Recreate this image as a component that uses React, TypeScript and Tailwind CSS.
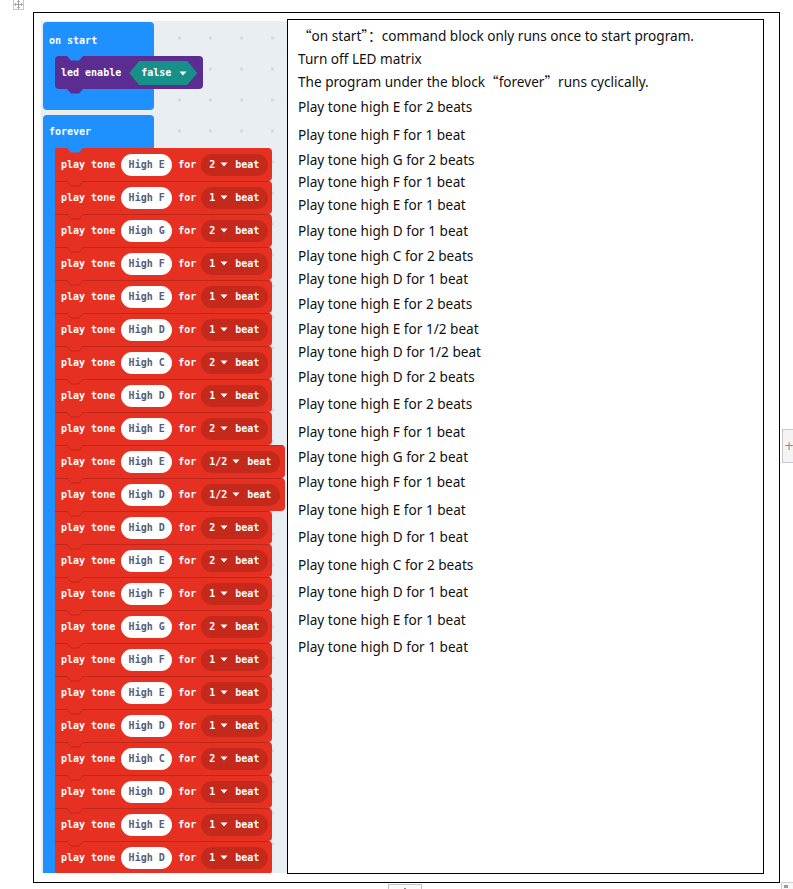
import React from "react";

const BLUE = "#1e90ff";

type Blk = { n: string; b: string };
const blocks: Blk[] = [
  { n: "E", b: "2" }, { n: "F", b: "1" }, { n: "G", b: "2" }, { n: "F", b: "1" },
  { n: "E", b: "1" }, { n: "D", b: "1" }, { n: "C", b: "2" }, { n: "D", b: "1" },
  { n: "E", b: "2" }, { n: "E", b: "1/2" }, { n: "D", b: "1/2" }, { n: "D", b: "2" },
  { n: "E", b: "2" }, { n: "F", b: "1" }, { n: "G", b: "2" }, { n: "F", b: "1" },
  { n: "E", b: "1" }, { n: "D", b: "1" }, { n: "C", b: "2" }, { n: "D", b: "1" },
  { n: "E", b: "1" }, { n: "D", b: "1" },
];

const lines: { t: React.ReactNode; c: string }[] = [
  { t: <><span className="font-['Noto_Sans_CJK_SC',sans-serif]">“</span>on start<span className="font-['Noto_Sans_CJK_SC',sans-serif]">”：</span>command block only runs once to start program.</>, c: "mt-0" },
  { t: "Turn off LED matrix", c: "mt-[3px]" },
  { t: <>The program under the block<span className="font-['Noto_Sans_CJK_SC',sans-serif]">“</span>forever<span className="font-['Noto_Sans_CJK_SC',sans-serif]">”</span>runs cyclically.</>, c: "mt-[2px]" },
  { t: "Play tone high E for 2 beats", c: "mt-[5px]" },
  { t: "Play tone high F for 1 beat", c: "mt-[8px]" },
  { t: "Play tone high G for 2 beats", c: "mt-[5px]" },
  { t: "Play tone high F for 1 beat", c: "mt-[2px]" },
  { t: "Play tone high E for 1 beat", c: "mt-[3px]" },
  { t: "Play tone high D for 1 beat", c: "mt-[6px]" },
  { t: "Play tone high C for 2 beats", c: "mt-[5px]" },
  { t: "Play tone high D for 1 beat", c: "mt-[3px]" },
  { t: "Play tone high E for 2 beats", c: "mt-[5px]" },
  { t: "Play tone high E for 1/2 beat", c: "mt-[5px]" },
  { t: "Play tone high D for 1/2 beat", c: "mt-[3px]" },
  { t: "Play tone high D for 2 beats", c: "mt-[5px]" },
  { t: "Play tone high E for 2 beats", c: "mt-[7px]" },
  { t: "Play tone high F for 1 beat", c: "mt-[8px]" },
  { t: "Play tone high G for 2 beat", c: "mt-[5px]" },
  { t: "Play tone high F for 1 beat", c: "mt-[5px]" },
  { t: "Play tone high E for 1 beat", c: "mt-[8px]" },
  { t: "Play tone high D for 1 beat", c: "mt-[7px]" },
  { t: "Play tone high C for 2 beats", c: "mt-[8px]" },
  { t: "Play tone high D for 1 beat", c: "mt-[7px]" },
  { t: "Play tone high E for 1 beat", c: "mt-[8px]" },
  { t: "Play tone high D for 1 beat", c: "mt-[7px]" },
];

function Tri() {
  return (
    <svg width="8" height="5" viewBox="0 0 8 5" className="shrink-0">
      <path d="M0.5 0.5 H7.5 L4 4.5 Z" fill="#fff" />
    </svg>
  );
}

function Notch({ fill, stroke }: { fill?: string; stroke?: string }) {
  return (
    <svg width="100%" height="6" viewBox="0 0 300 6" preserveAspectRatio="xMinYMin slice" className="absolute left-0 top-0 pointer-events-none">
      {fill ? (
        <path d="M12 0 L16 4.5 H24 L28 0 Z" fill={fill} />
      ) : (
        <path d="M0 0.5 H12 L16 5 H24 L28 0.5 H300" fill="none" stroke={stroke} strokeWidth="1" />
      )}
    </svg>
  );
}

function Tab({ color }: { color: string }) {
  return (
    <svg width="16" height="5" viewBox="0 0 16 5" className="absolute left-[12px] top-full">
      <path d="M0 0 L4 4.5 H12 L16 0 Z" fill={color} />
    </svg>
  );
}

function ToneBlock({ blk, first }: { blk: Blk; first: boolean }) {
  const half = blk.b === "1/2";
  return (
    <div
      className={
        "relative overflow-hidden flex items-center h-[33px] pl-[6px] bg-[#e63022] rounded-r-[4px] text-white " +
        (half ? "w-[230px]" : "w-[217px]")
      }
    >
      {first ? <Notch fill={BLUE} /> : <Notch stroke="rgba(120,20,10,0.35)" />}
      <span>play tone</span>
      <span className="ml-[6px] flex items-center justify-center w-[51px] h-[22px] rounded-full bg-white text-[#575e75]">
        High {blk.n}
      </span>
      <span className="ml-[6px]">for</span>
      <span
        className={
          "ml-[5px] flex items-center h-[22px] rounded-full bg-[#c4291c] pl-[8px] " +
          (half ? "w-[79px]" : "w-[67px]")
        }
      >
        <span>{blk.b}</span>
        <span className="ml-[5px] mr-[7px] flex items-center">
          <Tri />
        </span>
        <span>beat</span>
      </span>
    </div>
  );
}

function Workspace() {
  return (
    <div className="relative w-[246px] h-[852px] overflow-hidden bg-[#e9eef2] bg-[radial-gradient(circle,#d2d8dd_1.3px,transparent_1.8px)] bg-size-[31px_31px] bg-position-[30px_1.5px] pl-[2px] pt-[1px] font-['DejaVu_Sans_Mono',monospace] font-bold text-[10px] leading-none">
      {/* on start */}
      <div className="relative w-[111px] h-[88px] rounded-[4px] bg-[#1e90ff] text-white">
        <div className="h-[34px] flex items-center pl-[6px] pt-[3px]">on start</div>
        <div className="relative ml-[12px] w-[148px] h-[33px] rounded-[4px] bg-[#5c2d91] flex items-center pl-[6px] pt-[1px]">
          <Notch fill={BLUE} />
          <Tab color="#5c2d91" />
          <span>led enable</span>
          <span className="ml-[8px] flex items-center w-[68px] h-[24px] pl-[12px] bg-[#17908a] [clip-path:polygon(10px_0,58px_0,68px_50%,58px_100%,10px_100%,0_50%)]">
            <span>false</span>
            <span className="ml-[8px] flex items-center">
              <Tri />
            </span>
          </span>
        </div>
      </div>
      {/* forever */}
      <div className="relative mt-[5px] w-[111px] min-h-[800px] rounded-[4px] bg-[#1e90ff] text-white">
        <div className="h-[33px] flex items-center pl-[6px]">forever</div>
        <div className="ml-[12px] flex flex-col">
          {blocks.map((b, i) => (
            <ToneBlock key={i} blk={b} first={i === 0} />
          ))}
        </div>
      </div>
    </div>
  );
}

export default function App() {
  return (
    <div className="relative w-[793px] h-[889px] bg-white overflow-hidden pt-[12px]">
      {/* move handle */}
      <div className="absolute left-[13px] top-0 w-[11px] h-[10px] border border-[#c6c6c6] border-t-0 bg-white flex items-center justify-center">
        <svg width="9" height="9" viewBox="0 0 9 9">
          <path d="M4.5 0.5 V8.5 M0.5 4.5 H8.5" stroke="#8a8a8a" strokeWidth="0.8" />
          <path d="M3.2 1.8 L4.5 0.5 L5.8 1.8 M3.2 7.2 L4.5 8.5 L5.8 7.2 M1.8 3.2 L0.5 4.5 L1.8 5.8 M7.2 3.2 L8.5 4.5 L7.2 5.8" stroke="#8a8a8a" strokeWidth="0.8" fill="none" />
        </svg>
      </div>

      {/* table */}
      <div className="ml-[33px] w-[747px] h-[871px] border border-black flex items-start pl-[7px]">
        <div className="mt-[8px]">
          <Workspace />
        </div>
        <div className="mt-[6px] w-[477px] h-[855px] border border-black pl-[10px] pt-[5px] font-['Noto_Sans','Noto_Sans_CJK_SC',sans-serif] text-[13.6px] leading-[20px] text-[#111]">
          {lines.map((l, i) => (
            <div key={i} className={l.c + " whitespace-nowrap"}>
              {l.t}
            </div>
          ))}
        </div>
      </div>

      {/* right side + tab */}
      <div className="absolute left-[782px] top-[429px] w-[11px] h-[34px] border border-r-0 border-[#c9c9c9] bg-[#f4f4f4] flex items-center justify-start pl-[1px] text-[#8c8c8c] text-[12px] leading-none font-['DejaVu_Sans',sans-serif]">
        +
      </div>
      {/* bottom tab */}
      <div className="absolute left-[388px] top-[884px] w-[34px] h-[8px] border border-b-0 border-[#c2c2c2] bg-[#fafafa] flex justify-center">
        <div className="mt-[3px] w-[2px] h-[2px] bg-[#888]" />
      </div>
      {/* bottom-right resize */}
      <div className="absolute left-[781px] top-[882px] w-[12px] h-[8px] border border-b-0 border-r-0 border-[#cfcfcf] bg-[#f7f7f7] flex items-start justify-start p-[2px]">
        <div className="w-[4px] h-[3px] bg-[#9a9a9a]" />
      </div>
    </div>
  );
}
